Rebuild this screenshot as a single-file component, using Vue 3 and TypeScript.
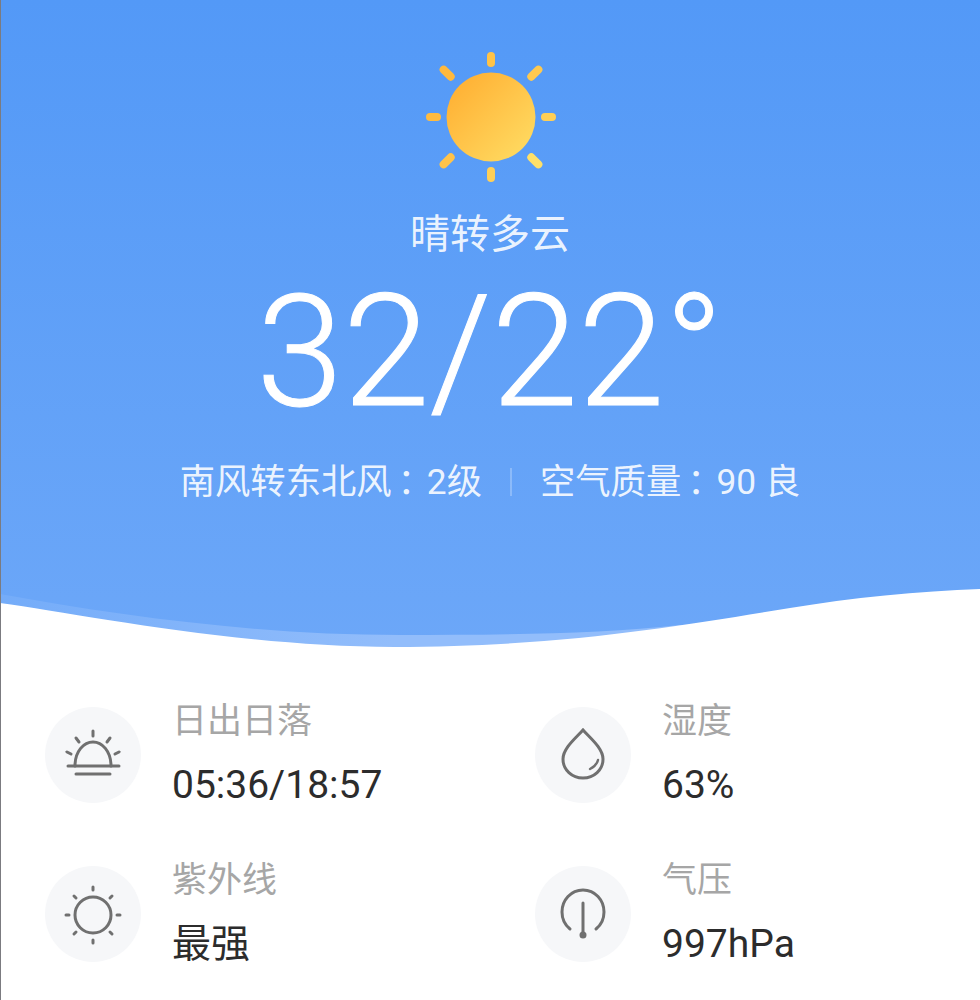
<script setup lang="ts">
interface Stat {
  key: string
  label: string
  value: string
}

interface Ray {
  deg: number
  color: string
  y: number
  len: number
}

const stats: Stat[] = [
  { key: 'sunrise', label: '日出日落', value: '05:36/18:57' },
  { key: 'humidity', label: '湿度', value: '63%' },
  { key: 'uv', label: '紫外线', value: '最强' },
  { key: 'pressure', label: '气压', value: '997hPa' },
]

// straight rays are shorter than the diagonal ones
const rays: Ray[] = [
  { deg: 0, color: '#ffc348', y: -65, len: 15 },
  { deg: 45, color: '#ffc94f', y: -71, len: 18 },
  { deg: 90, color: '#ffcf56', y: -65, len: 15 },
  { deg: 135, color: '#ffe068', y: -71, len: 18 },
  { deg: 180, color: '#ffcf56', y: -65, len: 15 },
  { deg: 225, color: '#ffc34a', y: -71, len: 18 },
  { deg: 270, color: '#ffbb40', y: -65, len: 15 },
  { deg: 315, color: '#ffb93e', y: -71, len: 18 },
]
</script>

<template>
  <div class="page">
    <section class="hero">
      <svg class="sun" width="132" height="132" viewBox="-66 -66 132 132">
        <defs>
          <linearGradient id="sunFill" x1="0" y1="0" x2="1" y2="1">
            <stop offset="0" stop-color="#ffab2e" />
            <stop offset="1" stop-color="#ffdf66" />
          </linearGradient>
          <linearGradient id="waveFill" x1="0" y1="0" x2="1" y2="0">
            <stop offset="0" stop-color="#74acf9" />
            <stop offset="0.4" stop-color="#92bdfb" />
            <stop offset="1" stop-color="#92bdfb" />
          </linearGradient>
        </defs>
        <circle r="44.5" fill="url(#sunFill)" />
        <rect
          v-for="r in rays"
          :key="r.deg"
          x="-4"
          :y="r.y"
          width="8"
          :height="r.len"
          rx="4"
          :fill="r.color"
          :transform="`rotate(${r.deg})`"
        />
      </svg>
      <div class="weather">晴转多云</div>
      <div class="temp">32/22°</div>
      <div class="meta">
        <span>南风转东北风<b class="colon">：</b>2级</span>
        <i class="sep"></i>
        <span>空气质量<b class="colon">：</b>90 良</span>
      </div>
      <svg class="wave" viewBox="0 0 980 60" preserveAspectRatio="none">
        <path d="M0 6 C120 28 260 47 400 47 C500 47 600 46 680 37 L980 30 L980 60 L0 60 Z" fill="url(#waveFill)" />
        <path d="M0 15 C80 26 240 59 394 59 C560 59 680 38 790 20 C850 10 920 3 980 1 L980 60 L0 60 Z" fill="#fff" />
      </svg>
    </section>

    <section class="stats">
      <div v-for="s in stats" :key="s.key" class="stat">
        <div class="icon">
          <svg width="96" height="96" viewBox="-48 -48 96 96" fill="none" stroke="#707070" stroke-width="3" stroke-linecap="round">
            <template v-if="s.key === 'sunrise'">
              <path d="M-18 11 C-18 -4 -9 -13 0 -13 C9 -13 18 -4 18 11" />
              <path d="M-25 11 H26" />
              <path d="M-17 19 H17" />
              <path d="M0 -24 V-19" />
              <path d="M-17 -17 L-14 -13" />
              <path d="M17 -17 L14 -13" />
              <path d="M-26 -3 L-22 -1" />
              <path d="M26 -3 L22 -1" />
            </template>
            <template v-else-if="s.key === 'humidity'">
              <path d="M0 -25 C-6 -18 -20 -7 -20 4 C-20 15 -11 23 0 23 C11 23 20 15 20 4 C20 -7 6 -18 0 -25 Z" />
              <path d="M7 14 C11 12 14 9 15 5" stroke-width="2.4" />
            </template>
            <template v-else-if="s.key === 'uv'">
              <circle cy="1" r="18" />
              <path d="M0 -27 V-24" />
              <path d="M0 26 V29" />
              <path d="M-27 1 H-24" />
              <path d="M24 1 H27" />
              <path d="M-19 -18 L-17 -16" />
              <path d="M19 -18 L17 -16" />
              <path d="M-19 20 L-17 18" />
              <path d="M19 20 L17 18" />
            </template>
            <template v-else>
              <path d="M-13 15 C-18 11 -21 5 -21 -2 C-21 -14 -12 -24 0 -24 C12 -24 21 -14 21 -2 C21 5 18 11 13 15" />
              <path d="M0 -11 V20" />
              <circle cy="21" r="3.5" fill="#707070" stroke="none" />
            </template>
          </svg>
        </div>
        <div class="text">
          <div class="label">{{ s.label }}</div>
          <div class="value">{{ s.value }}</div>
        </div>
      </div>
    </section>
  </div>
</template>

<style scoped>
.page {
  width: 980px;
  height: 1000px;
  overflow: hidden;
  background: #fff;
  font-family: Roboto, "Noto Sans CJK SC", sans-serif;
  position: relative;
}

.page::before {
  content: '';
  position: absolute;
  left: 0;
  top: 0;
  bottom: 0;
  width: 1px;
  background: #7b7b80;
  z-index: 2;
}

.hero {
  height: 648px;
  display: flex;
  flex-direction: column;
  align-items: center;
  padding-top: 51px;
  box-sizing: border-box;
  background: linear-gradient(180deg, #5399f7 0%, #6ca7f8 100%);
  color: #fff;
}

.sun {
  display: block;
  flex: none;
  margin-left: 2px;
}

.weather {
  margin-top: 24px;
  font-size: 40px;
  line-height: 56px;
  color: rgba(255, 255, 255, 0.9);
}

.temp {
  margin-top: -1px;
  font-size: 156px;
  line-height: 180px;
  font-weight: 300;
  -webkit-text-stroke: 1px #fff;
}

.meta {
  margin-top: 15px;
  display: flex;
  align-items: center;
  font-size: 35.3px;
  line-height: 50px;
  color: rgba(255, 255, 255, 0.9);
}

/* the colon sits further right in the source font */
.colon {
  font-weight: 400;
  margin-left: 6px;
  letter-spacing: -6px;
}

.sep {
  width: 2px;
  height: 28px;
  margin: 0 28px;
  background: rgba(255, 255, 255, 0.25);
}

.wave {
  display: block;
  width: 100%;
  height: 60px;
  margin-top: auto;
  flex: none;
}

.stats {
  display: grid;
  grid-template-columns: 490px 1fr;
  grid-auto-rows: 159px;
  padding: 59px 0 0 45px;
}

.stat {
  display: flex;
  align-items: flex-start;
  gap: 31px;
}

.icon {
  width: 96px;
  height: 96px;
  flex: none;
  border-radius: 50%;
  background: #f6f7f9;
}

.text {
  margin-top: -9px;
}

.label {
  font-size: 35px;
  line-height: 48px;
  color: #a6a6a6;
}

.value {
  margin-top: 15px;
  font-size: 39px;
  line-height: 48px;
  color: #2c2c2c;
}
</style>
